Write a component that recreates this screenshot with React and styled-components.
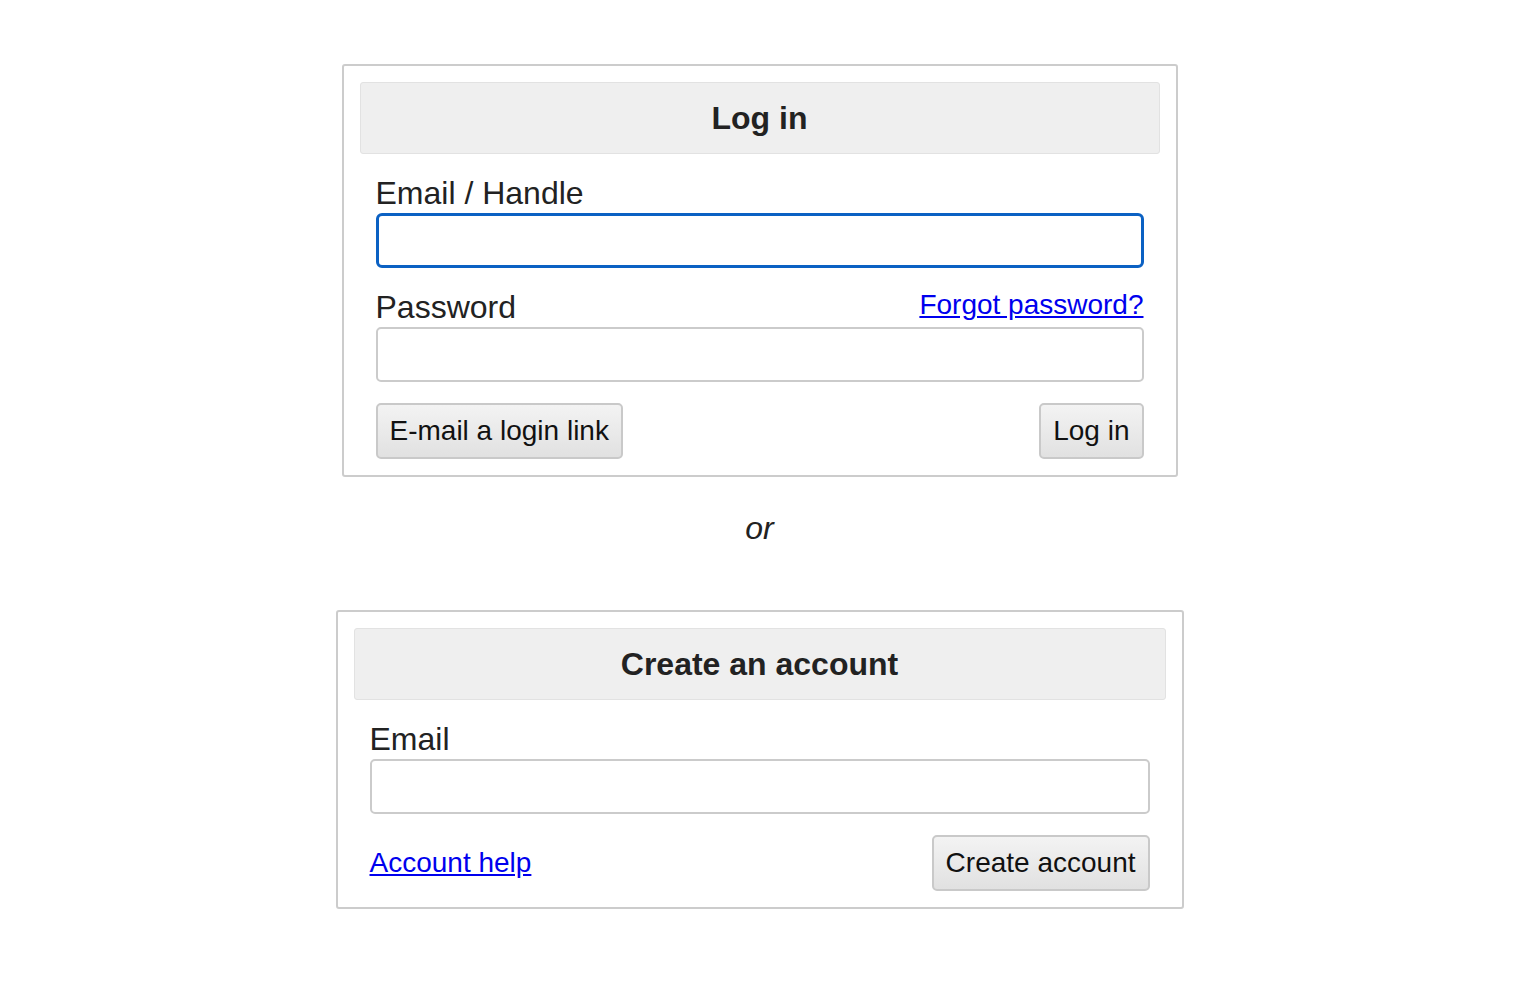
import styled, { createGlobalStyle } from "styled-components";

const GlobalStyle = createGlobalStyle`
    body {
        margin: 0;
        background: #ffffff;
        font-family: "Liberation Sans", Arial, Helvetica, sans-serif;
        color: #222222;
    }
`

const Page = styled.main`
    display: flex;
    flex-direction: column;
    align-items: center;
    padding: 64px 3px 40px 0;
`

const Panel = styled.form`
    box-sizing: border-box;
    width: ${props => props.width}px;
    border: 2px solid #cccccc;
    border-radius: 3px;
    padding: 16px;
    display: flex;
    flex-direction: column;
`

const PanelTitle = styled.h2`
    box-sizing: border-box;
    height: 72px;
    margin: 0 0 21px;
    display: flex;
    align-items: center;
    justify-content: center;
    background: #efefef;
    border: 1px solid #e2e2e2;
    border-radius: 3px;
    font-size: 32px;
    font-weight: bold;
    color: #222222;
`

const PanelBody = styled.div`
    padding: 0 16px;
    display: flex;
    flex-direction: column;
`

const LabelRow = styled.div`
    display: flex;
    justify-content: space-between;
    align-items: flex-start;
`

const Label = styled.label`
    font-size: 32px;
    line-height: 37px;
    color: #222222;
`

const Link = styled.a`
    font-size: 28px;
    color: #0000ee;
    text-decoration: underline;
    cursor: pointer;
`

const Input = styled.input`
    box-sizing: border-box;
    width: 100%;
    height: 55px;
    margin: 1px 0 21px;
    padding: 0 12px;
    font-size: 28px;
    font-family: inherit;
    background: #ffffff;
    border: ${props => props.$focused ? "3px solid #0b61c3" : "2px solid #cbcbcb"};
    border-radius: ${props => props.$focused ? "6px" : "5px"};
    outline: none;
`

const Actions = styled.div`
    display: flex;
    justify-content: space-between;
    align-items: center;
`

const Button = styled.button`
    box-sizing: border-box;
    height: 56px;
    padding: 0 12px;
    font-family: inherit;
    font-size: 28px;
    color: #111111;
    background: linear-gradient(#f3f3f3, #e1e1e1);
    border: 2px solid #c9c9c9;
    border-radius: 5px;
    cursor: pointer;
`

const Or = styled.p`
    margin: 33px 0 63px;
    font-size: 32px;
    line-height: 37px;
    font-style: italic;
    color: #222222;
`

const App = () => {
    return (
        <Page>
            <GlobalStyle />
            <Panel width={836} onSubmit={e => e.preventDefault()}>
                <PanelTitle>Log in</PanelTitle>
                <PanelBody>
                    <LabelRow>
                        <Label htmlFor="handle">Email / Handle</Label>
                    </LabelRow>
                    <Input id="handle" type="text" $focused />
                    <LabelRow>
                        <Label htmlFor="password">Password</Label>
                        <Link>Forgot password?</Link>
                    </LabelRow>
                    <Input id="password" type="password" />
                    <Actions>
                        <Button type="button">E-mail a login link</Button>
                        <Button type="submit">Log in</Button>
                    </Actions>
                </PanelBody>
            </Panel>
            <Or>or</Or>
            <Panel width={848} onSubmit={e => e.preventDefault()}>
                <PanelTitle>Create an account</PanelTitle>
                <PanelBody>
                    <LabelRow>
                        <Label htmlFor="email">Email</Label>
                    </LabelRow>
                    <Input id="email" type="email" />
                    <Actions>
                        <Link>Account help</Link>
                        <Button type="submit">Create account</Button>
                    </Actions>
                </PanelBody>
            </Panel>
        </Page>
    );
};

export default App;
